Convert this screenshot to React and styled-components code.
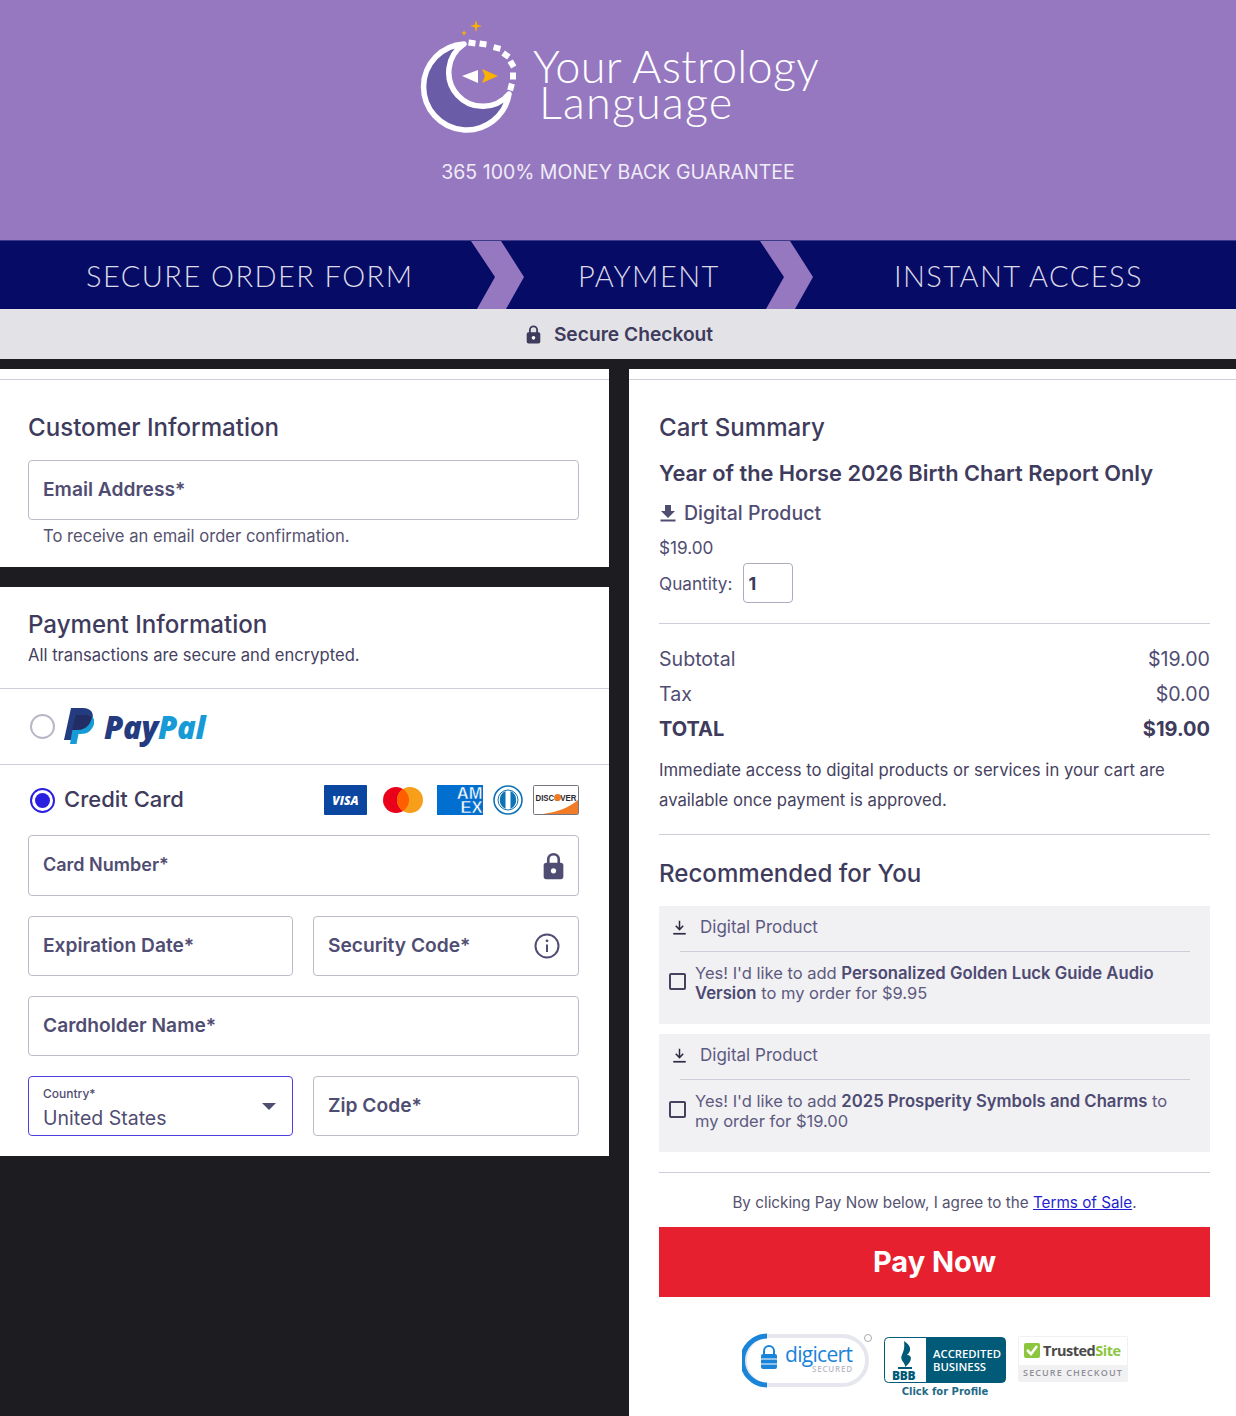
import styled, { createGlobalStyle } from 'styled-components';

const GlobalStyle = createGlobalStyle`
  * { box-sizing: border-box; }
  html, body { margin: 0; padding: 0; background: #1d1c20; }
  body { font-family: Inter, "Noto Sans", sans-serif; color: #4d4a72; }
`;

const Page = styled.div`
  width: 1236px;
  min-height: 1416px;
  background: #1d1c20;
`;

const Header = styled.header`
  height: 240px;
  background: #9678c0;
  display: flex;
  flex-direction: column;
  align-items: center;
  padding-top: 15px;
`;

const Brand = styled.div`
  display: flex;
  align-items: flex-start;
  margin-left: 2px;
`;

const BrandName = styled.div`
  font-family: Lato, sans-serif;
  font-weight: 300;
  font-size: 45px;
  line-height: 36px;
  letter-spacing: 0.3px;
  color: #fff;
  margin: 33px 0 0 13px;
  width: 290px;
  white-space: nowrap;
`;

const BrandLine = styled.div`
  padding-left: ${({ $indent }) => $indent || 0}px;
  letter-spacing: ${({ $indent }) => ($indent ? '1.2px' : 'inherit')};
`;

const Guarantee = styled.div`
  margin-top: 19px;
  font-family: Inter, sans-serif;
  font-size: 19.5px;
  line-height: 26px;
  color: #f0ecf7;
`;

const StepBar = styled.nav`
  height: 69px;
  background: #060b66;
  display: flex;
  border-top: 1px solid #3c3a88;
`;

const Step = styled.div`
  width: ${({ $width }) => $width}px;
  padding-left: ${({ $left }) => $left}px;
  display: flex;
  align-items: center;
  font-family: Lato, sans-serif;
  font-weight: 300;
  font-size: 29px;
  letter-spacing: 1.45px;
  color: #dcdae6;
  white-space: nowrap;
`;

const StepArrow = styled.svg`
  display: block;
  flex: none;
  width: 54px;
  height: 68px;
`;

const SecureBar = styled.div`
  height: 50px;
  background: #e3e2e7;
  display: flex;
  align-items: center;
  justify-content: center;
  gap: 13px;
  padding-left: 3px;
  font-size: 19.2px;
  font-weight: 600;
  color: #3e3b5c;
`;

const Columns = styled.main`
  display: grid;
  grid-template-columns: 609px 607px;
  column-gap: 20px;
  padding-top: 10px;
  align-items: start;
  width: 1236px;
`;

const LeftColumn = styled.div`
  display: flex;
  flex-direction: column;
  gap: 20px;
`;

const Card = styled.section`
  background: #fff;
`;

const CustomerCard = styled(Card)`
  height: 198px;
  padding: 10px 30px 0 28px;
`;

const TopRule = styled.div`
  height: 1px;
  background: #cfcdd8;
  margin: 0 -30px 0 -28px;
`;

const Heading = styled.h2`
  margin: ${({ $top }) => $top}px 0 -2px;
  font-size: 24.1px;
  line-height: 32px;
  font-weight: 500;
  color: #3e3b5c;
`;

const Field = styled.div`
  height: 60px;
  border: 1px solid ${({ $active }) => ($active ? '#4f3fe0' : '#bdbbc9')};
  border-radius: 4px;
  padding: 0 14px;
  display: flex;
  align-items: center;
  justify-content: space-between;
  font-size: ${({ $small }) => ($small ? 18 : 19.2)}px;
  font-weight: 600;
  color: #504d72;
  background: #fff;
`;

const FieldLabel = styled.span`
  margin-top: -3px;
`;

const EmailField = styled(Field)`
  margin-top: 18px;
`;

const HelpText = styled.p`
  margin: 6px 0 0 15px;
  font-size: 16.6px;
  line-height: 20px;
  color: #55526f;
`;

const PaymentCard = styled(Card)`
  height: 569px;
`;

const PaymentHead = styled.div`
  height: 102px;
  padding: 22px 30px 0 28px;
  border-bottom: 1px solid #cfcdd8;
`;

const Subtext = styled.p`
  margin: 4px 0 0;
  font-size: 16.6px;
  line-height: 24px;
  color: #45425f;
`;

const PaypalRow = styled.div`
  height: 76px;
  padding-left: 30px;
  display: flex;
  align-items: center;
  border-bottom: 1px solid #cfcdd8;
`;

const Radio = styled.span`
  flex: none;
  width: 25px;
  height: 25px;
  border-radius: 50%;
  border: 2.5px solid ${({ $checked }) => ($checked ? '#2a1fe0' : '#b9b7c6')};
  display: flex;
  align-items: center;
  justify-content: center;
  &::after {
    content: '';
    width: 15px;
    height: 15px;
    border-radius: 50%;
    background: ${({ $checked }) => ($checked ? '#2a1fe0' : 'transparent')};
  }
`;

const PaypalMark = styled.svg`
  width: 30px;
  height: 36px;
  margin: -2px 0 0 9px;
`;

const PaypalWord = styled.span`
  margin: 1px 0 0 10px;
  font-family: "Open Sans", sans-serif;
  font-style: italic;
  font-weight: 800;
  font-size: 31px;
  letter-spacing: -0.3px;
  color: #253b80;
  & > em { color: #179bd7; font-style: inherit; }
`;

const CreditRow = styled.div`
  height: 70px;
  padding: 0 30px 0 30px;
  display: flex;
  align-items: center;
`;

const CreditLabel = styled.span`
  margin: -2px 0 0 9px;
  font-size: 22px;
  font-weight: 500;
  color: #3e3b5c;
`;

const CardIcons = styled.div`
  margin-left: auto;
  display: flex;
  align-items: center;
`;

const CardIcon = styled.svg`
  display: block;
  width: ${({ $w }) => $w}px;
  height: 30px;
  margin-left: ${({ $gap }) => $gap}px;
`;

const FormStack = styled.div`
  padding: 0 30px 0 28px;
  display: flex;
  flex-direction: column;
  gap: 20px;
`;

const CardNumberField = styled(Field)`
  height: 61px;
`;

const FieldRow = styled.div`
  display: grid;
  grid-template-columns: 265px 1fr;
  column-gap: 20px;
`;

const InfoIcon = styled.svg`
  display: block;
  width: 26px;
  height: 26px;
  margin-right: 4px;
`;

const CountryValue = styled.div`
  display: flex;
  flex-direction: column;
  padding-top: 5px;
`;

const CountryLabel = styled.span`
  font-size: 12px;
  line-height: 16px;
  font-weight: 500;
  color: #504d72;
`;

const CountryName = styled.span`
  margin-top: 3px;
  font-size: 19.5px;
  line-height: 26px;
  font-weight: 400;
  color: #504d72;
`;

const Caret = styled.span`
  width: 0;
  height: 0;
  border-left: 7px solid transparent;
  border-right: 7px solid transparent;
  border-top: 7px solid #504d72;
  margin-right: 2px;
`;

const SummaryCard = styled(Card)`
  min-height: 1047px;
  padding: 10px 26px 0 30px;
`;

const SummaryRule = styled(TopRule)`
  margin: 0 -26px 0 -30px;
`;

const ProductTitle = styled.h3`
  margin: 16px 0 0;
  font-size: 21.8px;
  line-height: 30px;
  font-weight: 600;
  color: #3e3b5c;
`;

const DigitalLine = styled.div`
  margin-top: 10px;
  display: flex;
  align-items: center;
  gap: 7px;
  font-size: 19.5px;
  line-height: 30px;
  font-weight: 500;
  color: #504d72;
`;

const Price = styled.div`
  margin-top: 5px;
  font-size: 17.2px;
  line-height: 30px;
  color: #504d72;
`;

const QuantityRow = styled.div`
  display: flex;
  align-items: center;
  gap: 11px;
  font-size: 17.2px;
  color: #504d72;
`;

const QuantityBox = styled.div`
  width: 50px;
  height: 40px;
  border: 1px solid #aeacbc;
  border-radius: 4px;
  padding-left: 4px;
  display: flex;
  align-items: center;
  font-size: 18px;
  font-weight: 700;
  color: #3e3b5c;
`;

const Rule = styled.div`
  height: 1px;
  background: #cfcdd8;
  margin-top: ${({ $top }) => $top}px;
`;

const TotalRows = styled.div`
  margin-top: 17px;
`;

const TotalRow = styled.div`
  height: 35px;
  display: flex;
  align-items: center;
  justify-content: space-between;
  font-size: ${({ $strong }) => ($strong ? 20 : 19.6)}px;
  font-weight: ${({ $strong }) => ($strong ? 700 : 400)};
  color: ${({ $strong }) => ($strong ? '#3e3b5c' : '#504d72')};
`;

const Notice = styled.p`
  margin: 9px 0 0;
  font-size: 16.7px;
  line-height: 30px;
  color: #45425f;
`;

const Upsell = styled.div`
  height: 118px;
  margin-top: ${({ $top }) => $top}px;
  background: #f1f0f3;
  padding: 0 10px;
`;

const UpsellHead = styled.div`
  height: 45px;
  padding: 0 0 3px 3px;
  display: flex;
  align-items: center;
  gap: 13px;
  font-size: 17px;
  color: #5d5a80;
`;

const UpsellRule = styled.div`
  height: 1px;
  margin: 0 10px 0 11px;
  background: #cfcdd8;
`;

const UpsellBody = styled.div`
  display: flex;
  align-items: center;
  gap: 9px;
  margin-top: 11px;
`;

const Checkbox = styled.span`
  flex: none;
  width: 17px;
  height: 17px;
  margin-top: -4px;
  border: 2px solid #45425f;
  border-radius: 2px;
`;

const UpsellText = styled.div`
  max-width: 480px;
  font-size: 16.5px;
  line-height: 20px;
  color: #5d5a80;
  & > b { font-size: 16.7px; font-weight: 600; color: #4d4a72; }
`;

const Terms = styled.p`
  margin: 20px 0 0;
  text-align: center;
  font-size: 15.25px;
  line-height: 20px;
  color: #55526f;
  & > a { color: #1f1fd0; text-decoration: underline; }
`;

const PayButton = styled.button`
  display: block;
  width: 100%;
  height: 70px;
  margin-top: 14px;
  padding: 0 0 2px;
  border: 0;
  background: #e6202e;
  color: #fff;
  font-family: inherit;
  font-size: 29px;
  font-weight: 700;
`;

const Badges = styled.div`
  margin-top: 40px;
  height: 66px;
  display: flex;
  align-items: flex-start;
  justify-content: center;
  gap: 12px;
`;

const Badge = styled.svg`
  display: block;
  width: ${({ $w }) => $w}px;
  height: ${({ $h }) => $h}px;
  margin-top: ${({ $top }) => $top || 0}px;
  font-family: "Open Sans", sans-serif;
`;

const DownloadGlyph = ({ size = 18, color = '#504d72', solid }) => (
  <svg width={size} height={size} viewBox="0 0 18 18" style={{ flex: 'none' }}>
    {solid ? (
      <path d="M6 1h6v6h4l-7 7-7-7h4z" fill={color} />
    ) : (
      <path d="M9 1v10M4.5 7 9 11.5 13.5 7" fill="none" stroke={color} strokeWidth="1.8" />
    )}
    <rect x="1.5" y="15.5" width="15" height="2" fill={color} />
  </svg>
);

const LockGlyph = ({ w, h, color }) => (
  <svg width={w} height={h} viewBox="0 0 16 21" style={{ flex: 'none' }}>
    <path d="M4 9V5.5a4 4 0 0 1 8 0V9" fill="none" stroke={color} strokeWidth="2" />
    <rect x="0.5" y="8" width="15" height="12.5" rx="2" fill={color} />
    <circle cx="8" cy="14.2" r="2" fill="#fff" />
  </svg>
);

const Logo = () => (
  <svg width="105" height="125" viewBox="415 15 105 125" style={{ display: 'block', flex: 'none' }}>
    <path d="M464 44 A43 43 0 1 0 509 94 A34 34 0 1 1 464 44 Z" fill="#6b5ca8" stroke="#fff" strokeWidth="5.5" strokeLinejoin="round" />
    {[[472, 43, 8], [483, 44, 8], [497, 48, 14], [506, 55, 35], [512, 64, 60], [513, 76, 90], [511, 87, 105]].map(([x, y, r]) => (
      <rect key={x + '-' + y} x={x - 3.5} y={y - 3} width="7" height="6" fill="#fff" transform={`rotate(${r} ${x} ${y})`} />
    ))}
    <path d="M462 76 478 70v13z" fill="#fff" />
    <path d="M482 69 498 76 482 83l3-7z" fill="#fcb000" />
    <path d="M476 20l1.3 4.7L482 26l-4.7 1.3L476 32l-1.3-4.7L470 26l4.7-1.3z" fill="#fcb000" />
    <path d="M464 30l.8 2.2L467 33l-2.2.8L464 36l-.8-2.2L461 33l2.2-.8z" fill="#fcb000" />
  </svg>
);

const Chevron = () => (
  <StepArrow viewBox="0 0 54 68">
    <path d="M0 0H30L53 36 35 68H6L24 36Z" fill="#9678c0" />
  </StepArrow>
);

const VisaCard = () => (
  <CardIcon $w={43} $gap={0} viewBox="0 0 43 30">
    <rect width="43" height="30" rx="1" fill="#0b47a1" />
    <text x="21.5" y="20" textAnchor="middle" fontFamily="Open Sans, sans-serif" fontSize="12" fontWeight="800" fontStyle="italic" fill="#fff">VISA</text>
  </CardIcon>
);

const MasterCard = () => (
  <CardIcon $w={43} $gap={14} viewBox="0 0 43 30">
    <circle cx="15" cy="15" r="13" fill="#eb001b" />
    <circle cx="29" cy="15" r="13" fill="#f79e1b" />
    <path d="M22 4a13 13 0 0 1 0 22 13 13 0 0 1 0-22z" fill="#ff5f00" />
  </CardIcon>
);

const AmexCard = () => (
  <CardIcon $w={46} $gap={13} viewBox="0 0 46 30">
    <rect width="46" height="30" fill="#016fd0" />
    <text x="45.5" y="14" textAnchor="end" fontFamily="Liberation Sans, sans-serif" fontSize="16.5" fontWeight="700" fill="#fff" stroke="#016fd0" strokeWidth="0.5">AM</text>
    <text x="45.5" y="27.5" textAnchor="end" fontFamily="Liberation Sans, sans-serif" fontSize="16.5" fontWeight="700" fill="#fff" stroke="#016fd0" strokeWidth="0.5">EX</text>
  </CardIcon>
);

const DinersCard = () => (
  <CardIcon $w={30} $gap={10} viewBox="0 0 30 30">
    <circle cx="15" cy="15" r="14" fill="#fff" stroke="#0e72b5" strokeWidth="1.6" />
    <circle cx="15" cy="15" r="10" fill="#fff" stroke="#0e72b5" strokeWidth="1" />
    <path d="M12.5 6a10 10 0 0 0 0 18zM17.5 6a10 10 0 0 1 0 18z" fill="#0e72b5" />
  </CardIcon>
);

const DiscoverCard = () => (
  <CardIcon $w={46} $gap={10} viewBox="0 0 46 30">
    <rect x="0.5" y="0.5" width="45" height="29" rx="1" fill="#fff" stroke="#77757f" />
    <path d="M45 15V29H10C25 27 37 22 45 15Z" fill="#f27b25" />
    <text x="2.5" y="15.5" fontFamily="Liberation Sans Narrow, Liberation Sans, sans-serif" fontSize="8.5" fontWeight="700" fill="#2b2a30" textLength="41" lengthAdjust="spacingAndGlyphs">DISCOVER</text>
    <circle cx="24.6" cy="12.5" r="3.4" fill="#f27b25" />
  </CardIcon>
);

const DigicertBadge = () => (
  <Badge $w={130} $h={56} $top={-4} viewBox="0 0 130 56">
    <rect x="3" y="3" width="122" height="49" rx="24.5" fill="#fff" stroke="#e6e7ee" strokeWidth="4" />
    <path d="M25 3A24.5 24.5 0 0 0 25 52" fill="none" stroke="#1a84d8" strokeWidth="5" />
    <path d="M22 22v-4a5 5 0 0 1 10 0v4" fill="none" stroke="#1a84d8" strokeWidth="2" />
    <rect x="19" y="21" width="16" height="15" rx="2" fill="#1a84d8" />
    <path d="M19 26h16M19 31h16" stroke="#fff" strokeWidth="1" />
    <text x="43" y="29" fontSize="21" fontWeight="500" fill="#1a84d8" letterSpacing="-0.7">digicert</text>
    <text x="70" y="39" fontSize="8" fontWeight="600" fill="#b9bcc6" letterSpacing="0.8">SECURED</text>
    <circle cx="126" cy="5" r="3.5" fill="#fff" stroke="#aaa" />
  </Badge>
);

const BbbBadge = () => (
  <Badge $w={122} $h={62} viewBox="0 0 122 62">
    <rect x="0.5" y="0.5" width="121" height="45" rx="4" fill="#fff" stroke="#005a78" />
    <path d="M42 0.5H118a3.5 3.5 0 0 1 3.5 3.5V42a3.5 3.5 0 0 1-3.5 3.5H42Z" fill="#005a78" />
    <path d="M20 4c7 5 8 9 3 14 6 0 5 7-2 12 1-4-6-7-3-12 1-3 3-6 2-14Z" fill="#005a78" />
    <rect x="14" y="30" width="14" height="2" fill="#005a78" />
    <text x="8" y="43" fontSize="12" fontWeight="800" fill="#005a78" letterSpacing="-0.3">BBB</text>
    <text x="49" y="21" fontSize="11.3" fontWeight="600" fill="#fff">ACCREDITED</text>
    <text x="49" y="34" fontSize="11.3" fontWeight="600" fill="#fff">BUSINESS</text>
    <text x="61" y="58" textAnchor="middle" fontFamily="DejaVu Sans, sans-serif" fontSize="10" fontWeight="700" fill="#1f6a87">Click for Profile</text>
  </Badge>
);

const TrustedBadge = () => (
  <Badge $w={110} $h={46} $top={-1} viewBox="0 0 110 46">
    <rect width="110" height="46" rx="2" fill="#f1f1f3" />
    <rect x="1" y="1" width="108" height="28" fill="#fff" />
    <rect x="6" y="7" width="16" height="15" rx="2" fill="#8cc63f" />
    <path d="M9 14l4 4 6-8" fill="none" stroke="#fff" strokeWidth="2.5" />
    <text x="25" y="20" fontSize="14.5" fontWeight="700" fill="#4a4a4a" letterSpacing="-0.5">Trusted<tspan fill="#8cc63f">Site</tspan></text>
    <text x="55" y="40" textAnchor="middle" fontSize="9" fontWeight="600" fill="#8e8e96" letterSpacing="1.1">SECURE CHECKOUT</text>
  </Badge>
);

const UpsellCard = ({ top, children }) => (
  <Upsell $top={top}>
    <UpsellHead>
      <DownloadGlyph size={15} color="#2b2a40" />
      Digital Product
    </UpsellHead>
    <UpsellRule />
    <UpsellBody>
      <Checkbox />
      <UpsellText>{children}</UpsellText>
    </UpsellBody>
  </Upsell>
);

const App = () => {
  return (
    <Page>
      <GlobalStyle />
      <Header>
        <Brand>
          <Logo />
          <BrandName>
            <BrandLine>Your Astrology</BrandLine>
            <BrandLine $indent={6}>Language</BrandLine>
          </BrandName>
        </Brand>
        <Guarantee>365 100% MONEY BACK GUARANTEE</Guarantee>
      </Header>

      <StepBar>
        <Step $width={471} $left={86}>SECURE ORDER FORM</Step>
        <Chevron />
        <Step $width={235} $left={53}>PAYMENT</Step>
        <Chevron />
        <Step $width={422} $left={80}>INSTANT ACCESS</Step>
      </StepBar>

      <SecureBar>
        <LockGlyph w={15} h={19} color="#3e3b5c" />
        Secure Checkout
      </SecureBar>

      <Columns>
        <LeftColumn>
          <CustomerCard>
            <TopRule />
            <Heading $top={32}>Customer Information</Heading>
            <EmailField><FieldLabel>Email Address*</FieldLabel></EmailField>
            <HelpText>To receive an email order confirmation.</HelpText>
          </CustomerCard>

          <PaymentCard>
            <PaymentHead>
              <Heading $top={0}>Payment Information</Heading>
              <Subtext>All transactions are secure and encrypted.</Subtext>
            </PaymentHead>
            <PaypalRow>
              <Radio />
              <PaypalMark viewBox="0 0 30 36">
                <path d="M7 0H19C27 0 30 5 28.5 11 27 18 21 22 14 22H10L7.5 32H0Z" fill="#253b80" />
                <path d="M11 7H23C29 7 31 11 30 16 28 23 23 26 17 26H14.5L12.5 36H6Z" fill="#179bd7" />
                <path d="M11 7H23C25 7 27 7.5 28 8.5 27.5 15 22 22 14 22H8Z" fill="#222d65" />
              </PaypalMark>
              <PaypalWord>Pay<em>Pal</em></PaypalWord>
            </PaypalRow>
            <CreditRow>
              <Radio $checked />
              <CreditLabel>Credit Card</CreditLabel>
              <CardIcons>
                <VisaCard />
                <MasterCard />
                <AmexCard />
                <DinersCard />
                <DiscoverCard />
              </CardIcons>
            </CreditRow>
            <FormStack>
              <CardNumberField $small>
                <FieldLabel>Card Number*</FieldLabel>
                <LockGlyph w={21} h={28} color="#504d72" />
              </CardNumberField>
              <FieldRow>
                <Field><FieldLabel>Expiration Date*</FieldLabel></Field>
                <Field>
                  <FieldLabel>Security Code*</FieldLabel>
                  <InfoIcon viewBox="0 0 26 26">
                    <circle cx="13" cy="13" r="11.5" fill="none" stroke="#504d72" strokeWidth="2" />
                    <path d="M13 11.5V19" stroke="#504d72" strokeWidth="2" />
                    <circle cx="13" cy="7.8" r="1.4" fill="#504d72" />
                  </InfoIcon>
                </Field>
              </FieldRow>
              <Field><FieldLabel>Cardholder Name*</FieldLabel></Field>
              <FieldRow>
                <Field $active>
                  <CountryValue>
                    <CountryLabel>Country*</CountryLabel>
                    <CountryName>United States</CountryName>
                  </CountryValue>
                  <Caret />
                </Field>
                <Field><FieldLabel>Zip Code*</FieldLabel></Field>
              </FieldRow>
            </FormStack>
          </PaymentCard>
        </LeftColumn>

        <SummaryCard>
          <SummaryRule />
          <Heading $top={32}>Cart Summary</Heading>
          <ProductTitle>Year of the Horse 2026 Birth Chart Report Only</ProductTitle>
          <DigitalLine>
            <DownloadGlyph size={18} solid />
            Digital Product
          </DigitalLine>
          <Price>$19.00</Price>
          <QuantityRow>
            Quantity:
            <QuantityBox>1</QuantityBox>
          </QuantityRow>
          <Rule $top={20} />
          <TotalRows>
            <TotalRow>Subtotal<span>$19.00</span></TotalRow>
            <TotalRow>Tax<span>$0.00</span></TotalRow>
            <TotalRow $strong>TOTAL<span>$19.00</span></TotalRow>
          </TotalRows>
          <Notice>Immediate access to digital products or services in your cart are available once payment is approved.</Notice>
          <Rule $top={19} />
          <Heading $top={23}>Recommended for You</Heading>
          <UpsellCard top={18}>
            Yes! I'd like to add <b>Personalized Golden Luck Guide Audio Version</b> to my order for $9.95
          </UpsellCard>
          <UpsellCard top={10}>
            Yes! I'd like to add <b>2025 Prosperity Symbols and Charms</b> to my order for $19.00
          </UpsellCard>
          <Rule $top={20} />
          <Terms>By clicking Pay Now below, I agree to the <a href="#terms">Terms of Sale</a>.</Terms>
          <PayButton type="button">Pay Now</PayButton>
          <Badges>
            <DigicertBadge />
            <BbbBadge />
            <TrustedBadge />
          </Badges>
        </SummaryCard>
      </Columns>
    </Page>
  );
};

export default App;
